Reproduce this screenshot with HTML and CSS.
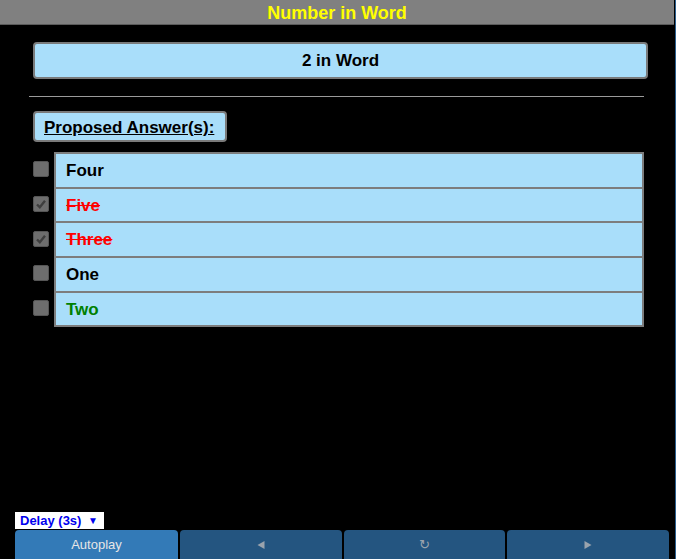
FILE: index.html
```html
<!DOCTYPE html>
<html lang="en">
<head>
<meta charset="utf-8">
<title>Number in Word</title>
<link rel="stylesheet" href="styles.css">
</head>
<body>
<div class="page">
  <div class="app">
    <header class="title">Number in Word</header>
    <main class="content">
      <div class="question">2 in Word</div>
      <hr class="sep">
      <div class="proposed"><span>Proposed Answer(s):</span></div>
      <div class="answers">
        <div class="row">
          <span class="check"></span>
          <div class="cell">Four</div>
        </div>
        <div class="row">
          <span class="check checked"><svg viewBox="0 0 16 16" width="16" height="16"><path d="M4 8.5 L6.8 11.2 L12 4.8" fill="none" stroke="#3e3e3e" stroke-width="2.4"/></svg></span>
          <div class="cell wrong">Five</div>
        </div>
        <div class="row">
          <span class="check checked"><svg viewBox="0 0 16 16" width="16" height="16"><path d="M4 8.5 L6.8 11.2 L12 4.8" fill="none" stroke="#3e3e3e" stroke-width="2.4"/></svg></span>
          <div class="cell wrong">Three</div>
        </div>
        <div class="row">
          <span class="check"></span>
          <div class="cell">One</div>
        </div>
        <div class="row">
          <span class="check"></span>
          <div class="cell right">Two</div>
        </div>
      </div>
    </main>
    <footer class="controls">
      <div class="delay"><span>Delay (3s)</span><span class="arrow">▼</span></div>
      <div class="buttons">
        <button class="btn primary">Autoplay</button>
        <button class="btn"><svg viewBox="0 0 10 10" width="10" height="10"><path d="M8.5 1 L1.5 5 L8.5 9 Z" fill="#9aa3ad"/></svg></button>
        <button class="btn"><span class="reload">↻</span></button>
        <button class="btn"><svg viewBox="0 0 10 10" width="10" height="10"><path d="M1.5 1 L8.5 5 L1.5 9 Z" fill="#9aa3ad"/></svg></button>
      </div>
    </footer>
  </div>
  <div class="edge"></div>
</div>
</body>
</html>
```
FILE: styles.css
```css
html, body {
  margin: 0;
  padding: 0;
  background: #000;
}
body {
  font-family: "Liberation Sans", Arial, sans-serif;
  overflow: hidden;
}
.page {
  display: flex;
  height: 559px;
  width: 676px;
}
.app {
  width: 674px;
  display: flex;
  flex-direction: column;
  height: 559px;
}
.edge {
  width: 1px;
  margin-left: 1px;
  background: #2b5f8e;
}
.title {
  height: 24px;
  background: #808080;
  border-bottom: 1px solid #5a5a5a;
  color: #ffff00;
  font-weight: bold;
  font-size: 18px;
  line-height: 26px;
  text-align: center;
}
.content {
  flex: 1;
  padding: 17px 30px 0 29px;
}
.question {
  margin-left: 4px;
  width: 611px;
  height: 33px;
  background: #a9defa;
  border: 2px solid #7a7a7a;
  border-radius: 4px;
  font-size: 17px;
  font-weight: bold;
  line-height: 34px;
  text-align: center;
  color: #000;
}
.sep {
  margin: 17px 0 0 0;
  border: 0;
  height: 1px;
  background: #9a9a9a;
}
.proposed {
  margin: 14px 0 0 4px;
  width: 190px;
  height: 27px;
  background: #a9defa;
  border: 2px solid #7a7a7a;
  border-radius: 4px;
  font-size: 17px;
  font-weight: bold;
  line-height: 29px;
  box-sizing: content-box;
}
.proposed span {
  display: block;
  text-decoration: underline;
  padding-left: 9px;
}
.answers {
  margin-top: 10px;
}
.row {
  display: flex;
  align-items: center;
  margin-left: 4px;
}
.row + .row {
  margin-top: -2px;
}
.check {
  width: 14px;
  height: 14px;
  border: 1px solid #555;
  border-radius: 2px;
  background: #6d6d6d;
  margin-right: 5px;
  margin-top: -2px;
  display: flex;
  align-items: center;
  justify-content: center;
  overflow: hidden;
}
.check svg {
  flex: none;
}
.cell {
  flex: 1;
  height: 32.7px;
  border: 2px solid #7d7d7d;
  background: #a9defa;
  font-size: 17px;
  font-weight: bold;
  line-height: 34px;
  padding-left: 10px;
  color: #000;
}
.cell.wrong {
  color: #ff0000;
  text-decoration: line-through;
}
.cell.right {
  color: #008000;
}
.controls {
  padding: 0 5px 0 15px;
}
.delay {
  width: 78px;
  height: 17px;
  background: #fff;
  color: #0000ee;
  font-size: 13px;
  font-weight: bold;
  line-height: 17px;
  padding: 0 6px 0 5px;
  display: flex;
  justify-content: space-between;
  align-items: center;
  margin-bottom: 1px;
}
.delay .arrow {
  font-size: 10px;
}
.buttons {
  display: flex;
  gap: 2px;
}
.btn {
  flex: 1;
  height: 29px;
  border: 0;
  border-radius: 4px 4px 0 0;
  background: #245580;
  color: #e6e6e6;
  font-family: "Liberation Sans", Arial, sans-serif;
  font-size: 13px;
  display: flex;
  align-items: center;
  justify-content: center;
  padding: 0;
}
.btn.primary {
  background: #337ab7;
  flex: 0 0 163px;
}
.reload {
  color: #9aa3ad;
  font-size: 13px;
  font-family: "DejaVu Sans", sans-serif;
}
```
